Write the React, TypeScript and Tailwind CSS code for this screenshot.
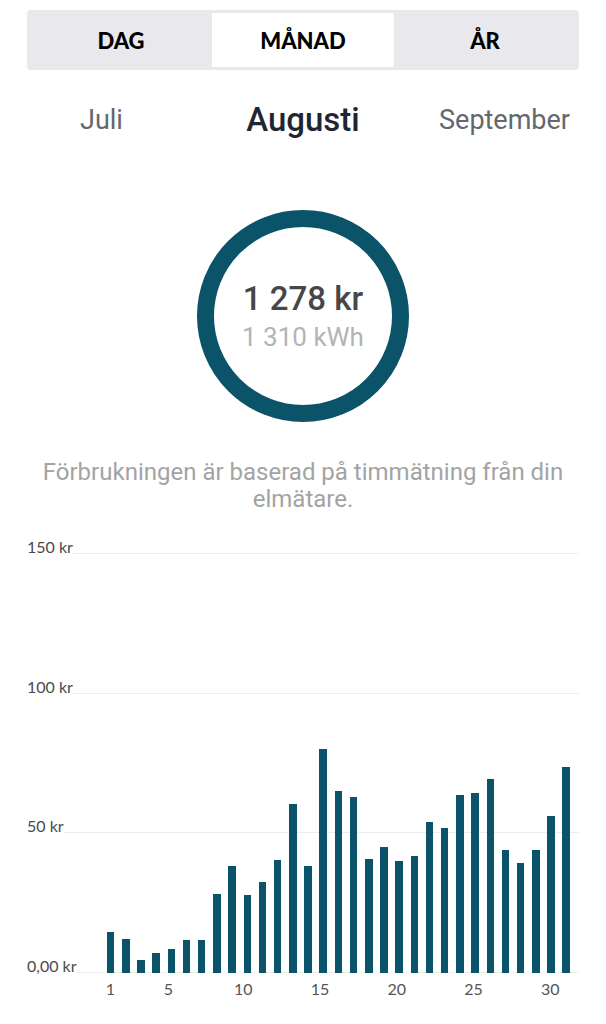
const days = [
  14.8, 12.1, 4.7, 7.2, 8.7, 11.7, 11.7, 28.4, 38.3, 27.8, 32.5, 40.4, 60.4, 38.3, 80.1, 65.3,
  62.9, 41.0, 45.3, 40.2, 41.8, 54.0, 52.1, 63.6, 64.5, 69.5, 43.9, 39.5, 43.9, 56.2, 73.7,
]

const pxPerKr = 139.7 / 50

function Tabs() {
  return (
    <div className="mx-[27px] mt-[10px] flex h-[60px] rounded-[4px] bg-[#e9e9ed] p-[3px] font-['Lato',sans-serif] text-[22px] font-black text-black">
      <div className="flex flex-1 items-center justify-center">DAG</div>
      <div className="flex flex-1 items-center justify-center bg-white">MÅNAD</div>
      <div className="flex flex-1 items-center justify-center">ÅR</div>
    </div>
  )
}

function Months() {
  return (
    <div className="mt-[25px] grid h-[40px] grid-cols-[1fr_auto_1fr] items-center font-['Roboto',sans-serif]">
      <div className="pl-[80px] text-[27px] text-[#63676e]">Juli</div>
      <div className="text-[33px] font-medium text-[#1f2631]">Augusti</div>
      <div className="pr-[36px] text-right text-[27px] text-[#63676e]">September</div>
    </div>
  )
}

function Total() {
  return (
    <div className="mx-auto mt-[75px] flex h-[212px] w-[212px] flex-col items-center justify-center rounded-full border-[17px] border-[#0b5368] font-['Roboto',sans-serif]">
      <div className="mt-[4px] text-[33px] leading-[38px] font-medium text-[#474747]">1 278 kr</div>
      <div className="text-[26px] leading-[38px] text-[#b4b4b4]">1 310 kWh</div>
    </div>
  )
}

function Chart() {
  const ticks = ["150 kr", "100 kr", "50 kr"]
  return (
    <div className="mx-[27px] mt-[40px] font-['Lato',sans-serif] text-[#4a4a4a]">
      <div className="relative">
        {ticks.map((t) => (
          <div key={t} className="flex h-[139.7px] items-start">
            <span className="-mt-[14px] text-[16px] leading-[16px]">{t}</span>
            <div className="h-px flex-1 bg-[#ececec]" />
          </div>
        ))}
        <div className="flex items-start">
          <span className="-mt-[14px] text-[16px] leading-[16px]">0,00 kr</span>
          <div className="h-px flex-1 bg-[#ececec]" />
        </div>
        <div className="absolute right-[5px] bottom-[1px] left-[76px] flex h-full items-end">
          {days.map((v, i) => (
            <div key={i} className="flex flex-1 justify-center">
              <div className="w-[7.5px] bg-[#0b5368]" style={{ height: v * pxPerKr }} />
            </div>
          ))}
        </div>
      </div>
      <div className="ml-[76px] mr-[5px] mt-[6px] flex text-[16px] leading-[18px] text-[#555]">
        {days.map((_, i) => {
          const d = i + 1
          const show = d === 1 || d % 5 === 0
          return (
            <div key={d} className="flex flex-1 justify-center">
              {show ? <span className="whitespace-nowrap">{d}</span> : null}
            </div>
          )
        })}
      </div>
    </div>
  )
}

export default function App() {
  return (
    <div className="min-h-[1024px] w-full bg-white">
      <Tabs />
      <Months />
      <Total />
      <p className="mx-[36px] mt-[37px] text-center font-['Roboto',sans-serif] text-[24px] leading-[27px] text-[#a3a3a3]">
        Förbrukningen är baserad på timmätning från din elmätare.
      </p>
      <Chart />
    </div>
  )
}
